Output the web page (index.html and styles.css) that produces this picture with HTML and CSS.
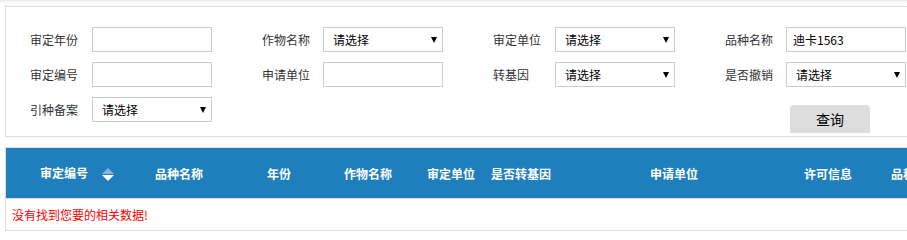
FILE: index.html
```html
<!DOCTYPE html>
<html lang="zh-CN">
<head>
<meta charset="utf-8">
<title>品种查询</title>
<link rel="stylesheet" href="styles.css">
</head>
<body>
<div class="page">
  <div class="topbar"></div>
  <div class="search-panel">
    <div class="search-grid">
      <div class="field"><label class="lbl">审定年份</label><input class="ipt" type="text"></div>
      <div class="field"><label class="lbl">作物名称</label><span class="sel-wrap"><select class="sel"><option>请选择</option></select></span></div>
      <div class="field"><label class="lbl">审定单位</label><span class="sel-wrap"><select class="sel"><option>请选择</option></select></span></div>
      <div class="field"><label class="lbl">品种名称</label><input class="ipt" type="text" value="迪卡1563"></div>

      <div class="field"><label class="lbl">审定编号</label><input class="ipt" type="text"></div>
      <div class="field"><label class="lbl">申请单位</label><input class="ipt" type="text"></div>
      <div class="field"><label class="lbl">转基因</label><span class="sel-wrap"><select class="sel"><option>请选择</option></select></span></div>
      <div class="field"><label class="lbl">是否撤销</label><span class="sel-wrap"><select class="sel"><option>请选择</option></select></span></div>

      <div class="field"><label class="lbl">引种备案</label><span class="sel-wrap"><select class="sel"><option>请选择</option></select></span></div>
      <div class="field empty"></div>
      <div class="field empty"></div>
      <div class="field btn-cell"><button class="btn-query" type="button">查询</button></div>
    </div>
  </div>

  <div class="table-wrap">
    <table class="result">
      <colgroup>
        <col class="c1"><col class="c2"><col class="c3"><col class="c4"><col class="c5"><col class="c6"><col class="c7"><col class="c8"><col class="c9">
      </colgroup>
      <thead>
        <tr>
          <th class="first">审定编号<svg class="sort" width="12" height="13" viewBox="0 0 12 13"><polygon points="0,6 6,0 12,6" fill="#8db4d6"/><polygon points="0,7 12,7 6,13" fill="#ffffff"/></svg></th>
          <th>品种名称</th>
          <th>年份</th>
          <th>作物名称</th>
          <th>审定单位</th>
          <th>是否转基因</th>
          <th>申请单位</th>
          <th>许可信息</th>
          <th>品种来源</th>
        </tr>
      </thead>
      <tbody>
        <tr><td class="empty-msg" colspan="9">没有找到您要的相关数据!</td></tr>
      </tbody>
    </table>
  </div>
</div>
</body>
</html>
```

FILE: styles.css
```css
html, body {
  margin: 0;
  padding: 0;
  overflow: hidden;
  background: #fff;
}

body {
  font-family: "Noto Sans CJK SC", "Microsoft YaHei", sans-serif;
  font-size: 12px;
  color: #333;
}

.page {
  width: 1000px;
  padding-left: 5px;
}

.topbar {
  height: 6px;
  margin-left: -5px;
  background: linear-gradient(#ececec, #f6f6f6 2px, #fff 3px);
}

.search-panel {
  border: 1px solid #ddd;
  padding: 20px 0 3px 24px;
}

.search-grid {
  display: grid;
  grid-template-columns: 182px 181px 182px 182px;
  column-gap: 50px;
  row-gap: 10px;
  align-items: start;
}

.field {
  display: flex;
  align-items: center;
  height: 25px;
}

.lbl {
  width: 62px;
  flex: none;
  line-height: 25px;
  color: #333;
}

.field:nth-child(4n+2) .lbl,
.field:nth-child(4n) .lbl {
  width: 61px;
}

.ipt {
  box-sizing: border-box;
  width: 120px;
  height: 25px;
  border: 1px solid #ccc;
  padding: 0 6px;
  font-family: inherit;
  font-size: 12px;
  color: #000;
  outline: none;
  margin: 0;
}

.sel-wrap {
  position: relative;
  display: inline-block;
  width: 120px;
  height: 25px;
}

.sel {
  box-sizing: border-box;
  -webkit-appearance: none;
  appearance: none;
  width: 120px;
  height: 25px;
  border: 1px solid #ccc;
  border-radius: 0;
  background: #fff;
  padding: 0 0 0 9px;
  font-family: inherit;
  font-size: 12px;
  color: #000;
  margin: 0;
}

.sel-wrap::after {
  content: "";
  position: absolute;
  right: 6px;
  top: 10px;
  border-left: 3px solid transparent;
  border-right: 3px solid transparent;
  border-top: 6px solid #000;
  pointer-events: none;
}

.btn-cell {
  height: auto;
}

.btn-query {
  margin: 8px 0 0 65px;
  width: 80px;
  height: 28px;
  border: none;
  border-radius: 4px 4px 0 0;
  background: #ddd;
  font-family: inherit;
  font-size: 14px;
  color: #000;
  padding: 0;
}

.table-wrap {
  margin-top: 10px;
  border: 1px solid #ddd;
}

.result {
  border-collapse: collapse;
  table-layout: fixed;
  width: 1005px;
}

.c1 { width: 149px; }
.c2 { width: 112px; }
.c3 { width: 77px; }
.c4 { width: 83px; }
.c5 { width: 64px; }
.c6 { width: 159px; }
.c7 { width: 154px; }
.c8 { width: 87px; }
.c9 { width: 120px; }

.result th {
  background: #1f7fbd;
  color: #fff;
  font-weight: bold;
  text-align: left;
  height: 50px;
  padding: 0;
  white-space: nowrap;
  border-bottom: 1px solid #ddd;
}

.result th.first {
  padding-left: 34px;
}

.sort {
  vertical-align: middle;
  margin-left: 14px;
  position: relative;
  top: -1px;
}

.empty-msg {
  height: 31px;
  padding: 0 0 0 6px;
  color: #f00;
}
```
